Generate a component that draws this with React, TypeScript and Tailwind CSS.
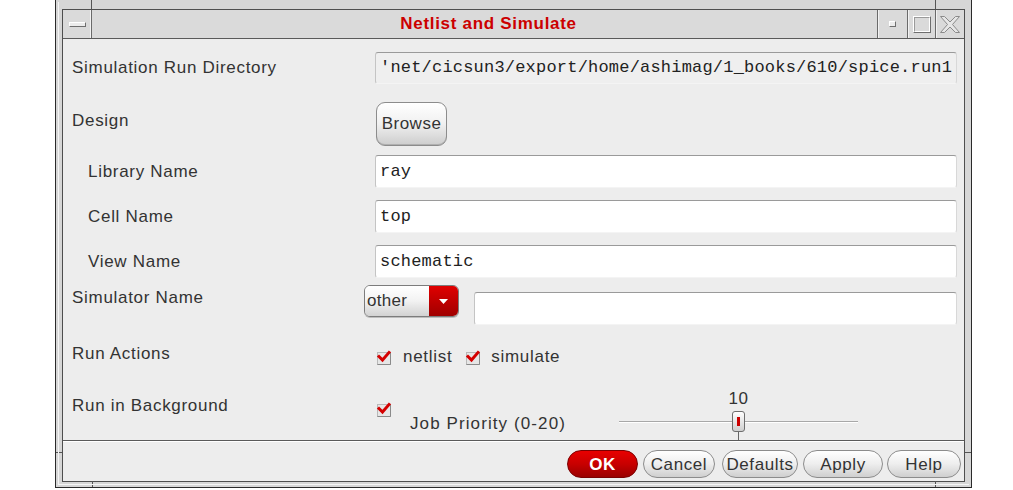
import React from "react";

const Label = ({ children, indent = false, className = "" }: { children: React.ReactNode; indent?: boolean; className?: string }) => (
  <div className={`text-[17px] leading-[20px] tracking-[0.7px] text-[#333] ${indent ? "pl-[16px]" : ""} ${className}`}>{children}</div>
);

const Field = ({ value, readOnly = false, className = "" }: { value: string; readOnly?: boolean; className?: string }) => (
  <div
    className={`flex items-center h-full rounded-[3px] border border-t-[#9a9a9a] border-l-[#c4c4c4] border-b-[#f4f4f4] border-r-[#d8d8d8] pl-[4px] overflow-hidden whitespace-nowrap font-['Liberation_Mono',monospace] text-[17px] tracking-[0.2px] text-[#222] ${readOnly ? "bg-[#efefef]" : "bg-white"} ${className}`}
  >
    {value}
  </div>
);

const Check = () => (
  <svg width="16" height="16" viewBox="0 0 16 16" className="shrink-0">
    <rect x="1.5" y="3.5" width="13" height="12" fill="#e6e6e6" stroke="#b8b8b8" />
    <line x1="1.5" y1="15.5" x2="14.5" y2="15.5" stroke="#8a8a8a" />
    <line x1="14.5" y1="3.5" x2="14.5" y2="15.5" stroke="#8a8a8a" />
    <path d="M3 7.5 L6.5 11 L13 3.5" fill="none" stroke="#d40000" strokeWidth="3" strokeLinecap="square" />
  </svg>
);

const PillButton = ({ children, w, ok = false }: { children: React.ReactNode; w: string; ok?: boolean }) => (
  <div
    className={`${w} h-[28px] shrink-0 rounded-full flex items-center justify-center text-[17px] tracking-[0.6px] leading-none ${
      ok
        ? "bg-gradient-to-b from-[#e80000] via-[#c80000] to-[#9a0000] border border-[#7a0000] text-white font-bold"
        : "bg-gradient-to-b from-[#ffffff] via-[#eeeeee] to-[#cfcfcf] border border-[#8c8c8c] text-[#333]"
    }`}
  >
    {children}
  </div>
);

export default function App() {
  return (
    <div className="w-[1013px] h-[490px] bg-white font-['Liberation_Sans',Arial,sans-serif]">
      <div className="relative ml-[55px] w-[917px] h-[488px] bg-[#d6d6d6] border-l border-r border-b border-[#2a2a2a] pt-[9px] px-[6px] pb-[5px] flex flex-col">
        {/* frame corner ticks */}
        <div className="absolute left-[35px] top-0 w-px h-[9px] bg-[#555]" />
        <div className="absolute left-[879px] top-0 w-px h-[9px] bg-[#555]" />
        <div className="absolute left-[36px] bottom-0 w-px h-[6px] bg-[#555]" />
        <div className="absolute left-[879px] bottom-0 w-px h-[6px] bg-[#555]" />
        <div className="absolute left-0 top-[452px] w-[6px] h-px bg-[#555]" />
        <div className="absolute right-0 top-[452px] w-[6px] h-px bg-[#555]" />
        <div className="absolute left-[2px] top-[2px] bottom-[2px] w-px bg-[#f4f4f4]" />
        <div className="absolute left-[2px] right-[2px] bottom-[2px] h-px bg-[#f4f4f4]" />

        <div className="flex-1 flex flex-col border border-[#4e4e4e] bg-[#ededed]">
          {/* title bar */}
          <div className="h-[29px] shrink-0 flex items-stretch bg-[#dadada] border-b border-[#5a5a5a]">
            <div className="w-[29px] border-r border-[#6a6a6a] shadow-[inset_-1px_0_0_#f2f2f2] flex items-center justify-center">
              <div className="w-[17px] h-[5px] bg-[#ececec] border border-t-white border-l-white border-b-[#6e6e6e] border-r-[#6e6e6e]" />
            </div>
            <div className="flex-1 flex items-center justify-center text-[#cc0000] font-bold text-[17px] tracking-[0.7px] pl-[8px]">
              Netlist and Simulate
            </div>
            <div className="w-[30px] border-l border-[#6a6a6a] shadow-[inset_1px_0_0_#f2f2f2] flex items-center justify-center">
              <div className="w-[7px] h-[6px] bg-[#ececec] border border-t-white border-l-white border-b-[#6e6e6e] border-r-[#6e6e6e]" />
            </div>
            <div className="w-[28px] border-l border-[#6a6a6a] shadow-[inset_1px_0_0_#f2f2f2] flex items-center justify-center">
              <div className="w-[18px] h-[17px] border border-t-white border-l-white border-b-[#6e6e6e] border-r-[#6e6e6e]">
                <div className="w-full h-full border border-t-[#9a9a9a] border-l-[#9a9a9a] border-b-white border-r-white" />
              </div>
            </div>
            <div className="w-[29px] border-l border-[#6a6a6a] shadow-[inset_1px_0_0_#f2f2f2] flex items-center justify-center">
              <svg width="20" height="17" viewBox="0 0 20 17">
                <polygon
                  points="0.5,0.5 4.5,0.5 10,6 15.5,0.5 19.5,0.5 12.5,8.5 19.5,16.5 15.5,16.5 10,11 4.5,16.5 0.5,16.5 7.5,8.5"
                  fill="#e6e6e6"
                  stroke="#8a8a8a"
                />
              </svg>
            </div>
          </div>

          {/* content */}
          <div className="flex-1 flex flex-col pl-[9px] pr-[7px]">
            <div className="mt-[13px] h-[32px] flex items-center">
              <Label className="w-[303px] shrink-0">Simulation Run Directory</Label>
              <div className="flex-1 h-full">
                <Field value="'net/cicsun3/export/home/ashimag/1_books/610/spice.run1" readOnly />
              </div>
            </div>

            <div className="mt-[18px] h-[44px] flex items-center">
              <Label className="w-[304px] shrink-0 mb-[6px]">Design</Label>
              <div className="w-[71px] h-[44px] rounded-[9px] border border-[#8c8c8c] bg-gradient-to-b from-white via-[#f0f0f0] to-[#cdcdcd] flex items-center justify-center text-[17px] tracking-[0.5px] text-[#333] shadow-[inset_0_-1px_0_#b0b0b0]">
                Browse
              </div>
            </div>

            <div className="mt-[9px] h-[33px] flex items-center">
              <Label indent className="w-[303px] shrink-0">Library Name</Label>
              <div className="flex-1 h-full"><Field value="ray" /></div>
            </div>
            <div className="mt-[12px] h-[33px] flex items-center">
              <Label indent className="w-[303px] shrink-0">Cell Name</Label>
              <div className="flex-1 h-full"><Field value="top" /></div>
            </div>
            <div className="mt-[12px] h-[33px] flex items-center">
              <Label indent className="w-[303px] shrink-0">View Name</Label>
              <div className="flex-1 h-full"><Field value="schematic" /></div>
            </div>

            <div className="mt-[7px] h-[40px] flex items-start">
              <Label className="w-[292px] shrink-0 mt-[3px]">Simulator Name</Label>
              <div className="w-[95px] h-[32px] shrink-0 flex rounded-[6px] border border-[#7c7c7c] overflow-hidden shadow-[0_1px_0_#bdbdbd]">
                <div className="flex-1 bg-gradient-to-b from-white via-[#f2f2f2] to-[#d2d2d2] flex items-center pl-[2px] text-[17px] tracking-[0.3px] text-[#333]">
                  other
                </div>
                <div className="w-[29px] bg-gradient-to-b from-[#e00000] to-[#a00000] flex items-center justify-center">
                  <svg width="9" height="5" viewBox="0 0 9 5">
                    <polygon points="0,0 9,0 4.5,5" fill="white" />
                  </svg>
                </div>
              </div>
              <div className="flex-1 ml-[15px] mt-[7px] h-[33px]"><Field value="" /></div>
            </div>

            <div className="mt-[19px] h-[20px] flex items-center">
              <Label className="w-[304px] shrink-0">Run Actions</Label>
              <div className="flex items-center mt-[5px] text-[17px] tracking-[0.7px] text-[#333]">
                <Check />
                <span className="ml-[11px]">netlist</span>
                <span className="ml-[13px]"><Check /></span>
                <span className="ml-[10px]">simulate</span>
              </div>
            </div>

            <div className="mt-[24px] h-[52px] flex items-start">
              <Label className="w-[304px] shrink-0 mt-[8px]">Run in Background</Label>
              <div className="mt-[13px] w-[34px] shrink-0"><Check /></div>
              <div className="mt-[26px] w-[209px] shrink-0 text-[17px] leading-[20px] tracking-[1.1px] text-[#333]">Job Priority (0-20)</div>
              <div className="relative w-[239px] h-[52px] shrink-0">
                <div className="absolute left-0 right-0 top-[3px] text-center text-[17px] leading-[16px] tracking-[0.5px] text-[#333]">10</div>
                <div className="absolute left-0 right-0 top-[33px] h-px bg-[#a8a8a8] shadow-[0_1px_0_#ffffff]" />
                <div className="absolute left-[113px] top-[23px] w-[13px] h-[21px] rounded-[3px] border border-[#6e6e6e] bg-gradient-to-b from-white to-[#cfcfcf] flex items-center justify-center">
                  <div className="w-[3px] h-[9px] bg-[#cc0000]" />
                </div>
                <div className="absolute left-[119px] top-[44px] w-px h-[8px] bg-[#666]" />
              </div>
            </div>
          </div>

          {/* separator */}
          <div className="h-[2px] shrink-0 border-t border-[#5a5a5a] bg-white" />

          {/* button bar */}
          <div className="h-[39px] shrink-0 flex items-start justify-end pt-[8px] pr-[3px]">
            <PillButton w="w-[71px]" ok>OK</PillButton>
            <div className="w-[5px] shrink-0" />
            <PillButton w="w-[72px]">Cancel</PillButton>
            <div className="w-[7px] shrink-0" />
            <PillButton w="w-[76px]">Defaults</PillButton>
            <div className="w-[5px] shrink-0" />
            <PillButton w="w-[80px]">Apply</PillButton>
            <div className="w-[4px] shrink-0" />
            <PillButton w="w-[74px]">Help</PillButton>
          </div>
        </div>
      </div>
    </div>
  );
}
